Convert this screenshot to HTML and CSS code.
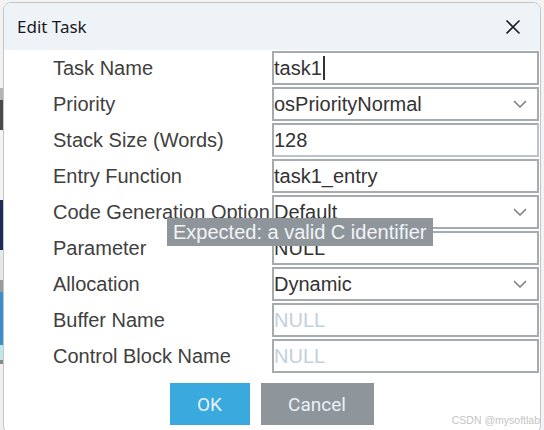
FILE: index.html
```html
<!DOCTYPE html>
<html>
<head>
<meta charset="utf-8">
<link rel="stylesheet" href="styles.css">
</head>
<body>
<div class="dialog">
  <div class="titlebar">
    <span class="title">Edit Task</span>
    <svg class="close" width="16" height="16" viewBox="0 0 16 16"><path d="M1.5 1.5 L14.5 14.5 M14.5 1.5 L1.5 14.5" stroke="#1f1f1f" stroke-width="1.6" fill="none"/></svg>
  </div>
  <div class="form">
    <div class="label">Task Name</div>
    <div class="field"><span class="val">task1</span><span class="caret"></span></div>

    <div class="label">Priority</div>
    <div class="field select"><span class="val">osPriorityNormal</span><svg class="chev" width="14" height="8" viewBox="0 0 14 8"><path d="M1 1 L7 7 L13 1" stroke="#7d7d7d" stroke-width="1.5" fill="none"/></svg></div>

    <div class="label">Stack Size (Words)</div>
    <div class="field focus"><span class="val">128</span></div>

    <div class="label">Entry Function</div>
    <div class="field"><span class="val">task1_entry</span></div>

    <div class="label">Code Generation Option</div>
    <div class="field select"><span class="val">Default</span><svg class="chev" width="14" height="8" viewBox="0 0 14 8"><path d="M1 1 L7 7 L13 1" stroke="#7d7d7d" stroke-width="1.5" fill="none"/></svg></div>

    <div class="label">Parameter</div>
    <div class="field"><span class="val">NULL</span></div>

    <div class="label">Allocation</div>
    <div class="field select"><span class="val">Dynamic</span><svg class="chev" width="14" height="8" viewBox="0 0 14 8"><path d="M1 1 L7 7 L13 1" stroke="#7d7d7d" stroke-width="1.5" fill="none"/></svg></div>

    <div class="label">Buffer Name</div>
    <div class="field"><span class="val placeholder">NULL</span></div>

    <div class="label">Control Block Name</div>
    <div class="field"><span class="val placeholder">NULL</span></div>
  </div>
  <div class="buttons">
    <div class="btn ok">OK</div>
    <div class="btn cancel">Cancel</div>
  </div>
  <div class="tooltip">Expected: a valid C identifier</div>
  <div class="watermark">CSDN @mysoftlab</div>
</div>
</body>
</html>
```
FILE: styles.css
```css
html, body {
  margin: 0;
  padding: 0;
}
body {
  width: 544px;
  height: 430px;
  overflow: hidden;
  background:
    linear-gradient(to bottom,
      #f2f2f2 0px, #f2f2f2 88px,
      #b4b4b4 88px, #b4b4b4 100px,
      #4a4a4a 100px, #4a4a4a 130px,
      #f4f4f4 130px, #f4f4f4 200px,
      #1c2c52 200px, #1c2c52 250px,
      #e8e8e8 250px, #e8e8e8 280px,
      #9a9a9a 280px, #9a9a9a 292px,
      #3b8dcc 292px, #3b8dcc 345px,
      #bfe6ea 345px, #bfe6ea 360px,
      #8a8a8a 360px, #8a8a8a 364px,
      #efefef 364px) left top / 3px 100% no-repeat,
    #f3f3f3;
}
.dialog {
  position: relative;
  margin: 2px 0 0 3px;
  width: 536px;
  height: 430px;
  border: 1px solid #c2c6ca;
  border-radius: 8px;
  background: #ffffff;
  overflow: hidden;
}
.titlebar {
  height: 47px;
  background: #eef3f8;
  display: flex;
  align-items: center;
  justify-content: space-between;
  padding: 0 19px 0 13px;
}
.title {
  font-family: "Noto Sans", sans-serif;
  font-size: 17px;
  color: #1a1a1a;
  margin-top: -1px;
}
.close {
  display: block;
  margin-top: 1px;
}
.form {
  display: grid;
  grid-template-columns: 219px 267px;
  grid-auto-rows: 34px;
  row-gap: 2px;
  padding: 1px 0 0 49px;
}
.label {
  font-family: "Liberation Sans", Arial, sans-serif;
  font-size: 20px;
  color: #404040;
  white-space: nowrap;
  overflow: hidden;
  display: flex;
  align-items: center;
}
.field {
  box-sizing: border-box;
  border: 2px solid #a6abb0;
  background: #ffffff;
  display: flex;
  align-items: center;
  padding: 0 10px 0 0;
  font-family: "Liberation Sans", Arial, sans-serif;
  font-size: 20px;
  color: #333333;
}
.field.focus {
  border-color: #a6abb0 #b8c4cf #b8c4cf #a6abb0;
}
.val {
  flex: 1;
  white-space: nowrap;
}
.field .caret + .val,
.field .val:has(+ .caret) {
  flex: 0 0 auto;
}
.caret {
  display: inline-block;
  width: 2px;
  height: 24px;
  background: #333;
  margin-left: 1px;
}
.placeholder {
  color: #c3d0de;
}
.chev {
  display: block;
  flex: 0 0 auto;
}
.buttons {
  display: flex;
  justify-content: center;
  gap: 11px;
  margin-top: 10px;
  padding-right: 1px;
}
.btn {
  height: 42px;
  display: flex;
  align-items: center;
  justify-content: center;
  font-family: Roboto, "Liberation Sans", sans-serif;
  font-size: 19px;
  color: #e9f1f7;
}
.ok {
  width: 80px;
  background: #3aa9dd;
}
.cancel {
  width: 113px;
  background: #8f969b;
}
.tooltip {
  position: absolute;
  left: 163px;
  top: 215px;
  width: 266px;
  height: 28px;
  box-sizing: border-box;
  padding-left: 6px;
  background: #8f969b;
  color: #f2f4f6;
  font-family: "Liberation Sans", Arial, sans-serif;
  font-size: 20px;
  line-height: 28px;
  white-space: nowrap;
}
.watermark {
  position: absolute;
  right: 0;
  bottom: 7px;
  font-family: "Liberation Sans", Arial, sans-serif;
  font-size: 10.5px;
  color: #c4c4c4;
}
```
